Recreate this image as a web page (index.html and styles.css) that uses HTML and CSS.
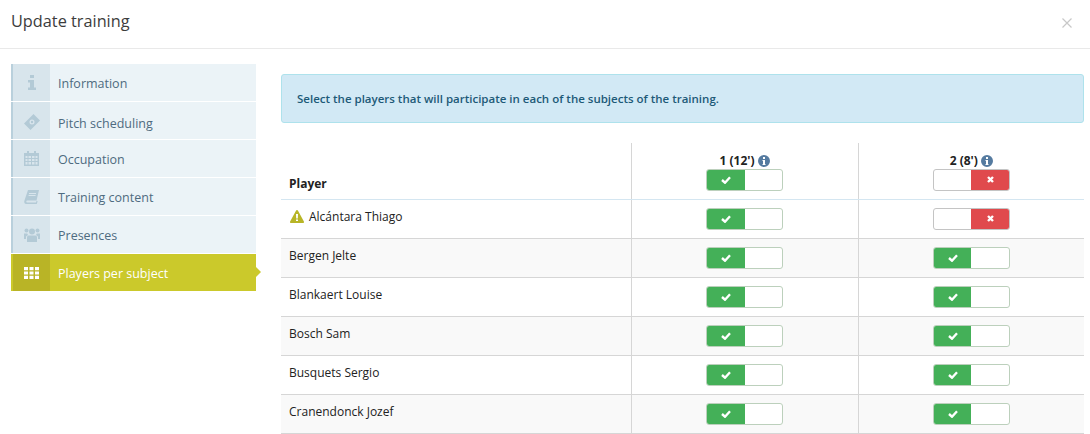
FILE: index.html
```html
<!DOCTYPE html>
<html lang="en">
<head>
    <meta charset="UTF-8">
    <title>Update training</title>
    <link rel="stylesheet" href="styles.css">
</head>
<body>
    <header class="modal-header">
        <h1>Update training</h1>
        <svg class="close" width="10" height="10" viewBox="0 0 10 10"><path d="M.5.5l9 9M9.5.5l-9 9" stroke="#c8c8c8" stroke-width="1.2" fill="none"/></svg>
    </header>
    <div class="modal-body">
        <nav class="side-nav">
            <a class="nav-item">
                <span class="nav-icon"><svg width="8" height="15" viewBox="0 0 8 15"><path d="M2 0h4v3H2zM0 5h6v7.500h2V15H0v-2.500h2V7.500H0z"/></svg></span>
                <span class="nav-label">Information</span>
            </a>
            <a class="nav-item shifted">
                <span class="nav-icon"><svg width="16" height="16" viewBox="0 0 16 16"><path fill-rule="evenodd" d="M9.500 0L16 6.500 6.500 16 0 9.500zM8 5.500a2.500 2.500 0 1 0 0 5 2.500 2.500 0 0 0 0-5zM8 6.800a1.200 1.200 0 1 1 0 2.400 1.200 1.200 0 0 1 0-2.400z"/></svg></span>
                <span class="nav-label">Pitch scheduling</span>
            </a>
            <a class="nav-item">
                <span class="nav-icon"><svg width="15" height="15" viewBox="0 0 15 15"><path fill-rule="evenodd" d="M3 0h2v2h5V0h2v2h3v13H0V2h3zM1.500 5v2h2V5zm3 0v2h2.500V5zm3.500 0v2h2.500V5zm3.500 0v2h2V5zm-10 3v2h2V8zm3 0v2h2.500V8zm3.500 0v2h2.500V8zm3.500 0v2h2V8zm-10 3v2.500h2V11zm3 0v2.500h2.500V11zm3.500 0v2.500h2.500V11zm3.500 0v2.500h2V11z"/></svg></span>
                <span class="nav-label">Occupation</span>
            </a>
            <a class="nav-item">
                <span class="nav-icon"><svg width="15" height="14" viewBox="0 0 15 14"><path fill-rule="evenodd" d="M4 0h11l-2.500 10.500H3.200c-1.200 0-1.200 2 0 2H12l.6-1.800 1 .500-.8 2.800H2.200C.5 14 0 12.500.3 11zM5 3v1h7V3zM4.600 5v1h7V5z"/></svg></span>
                <span class="nav-label">Training content</span>
            </a>
            <a class="nav-item">
                <span class="nav-icon"><svg width="16" height="14" viewBox="0 0 16 14"><circle cx="8" cy="3.500" r="3"/><circle cx="2.500" cy="2.500" r="2"/><circle cx="13.500" cy="2.500" r="2"/><path d="M4.500 7.500h7c1 0 1.500 1 1.500 2V14H3V9.500c0-1 .5-2 1.500-2zM0 5.500h3.200L4 7 2 8.500V11H0zM12.800 5.500H16V11h-2V8.500L12 7z"/></svg></span>
                <span class="nav-label">Presences</span>
            </a>
            <a class="nav-item active">
                <span class="nav-icon"><svg width="15" height="12" viewBox="0 0 15 12"><path d="M0 0h4v3.300H0zM5.500 0h4v3.300h-4zM11 0h4v3.300h-4zM0 4.400h4v3.200H0zM5.500 4.400h4v3.200h-4zM11 4.400h4v3.200h-4zM0 8.700h4V12H0zM5.500 8.700h4V12h-4zM11 8.700h4V12h-4z"/></svg></span>
                <span class="nav-label">Players per subject</span>
            </a>
        </nav>
        <main class="content">
            <div class="alert">Select the players that will participate in each of the subjects of the training.</div>
            <table class="players">
                <thead>
                    <tr>
                        <th class="name">Player</th>
                        <th>
                            <div class="subject">1 (12') <svg class="info" width="12" height="12" viewBox="0 0 12 12"><path fill-rule="evenodd" d="M6 0a6 6 0 1 1 0 12A6 6 0 0 1 6 0zM5 2v2h2V2zM4.500 5v1H5v3h-.5v1h3V9H7V5z"/></svg></div>
                            <span class="toggle on"><b><svg width="10" height="8" viewBox="0 0 10 8"><path d="M1 4l3 2.700L9 1.300" stroke="#fff" stroke-width="2.400" fill="none"/></svg></b><i></i></span>
                        </th>
                        <th>
                            <div class="subject">2 (8') <svg class="info" width="12" height="12" viewBox="0 0 12 12"><path fill-rule="evenodd" d="M6 0a6 6 0 1 1 0 12A6 6 0 0 1 6 0zM5 2v2h2V2zM4.500 5v1H5v3h-.5v1h3V9H7V5z"/></svg></div>
                            <span class="toggle off"><i></i><b><svg width="7" height="7" viewBox="0 0 7 7"><path d="M1 1l5 5M6 1L1 6" stroke="#fff" stroke-width="2.400" fill="none"/></svg></b></span>
                        </th>
                    </tr>
                </thead>
                <tbody>
                    <tr>
                        <td class="name"><svg class="warn" width="14" height="13" viewBox="0 0 14 13"><path fill-rule="evenodd" d="M7 0c.4 0 .7.200.9.500l6 11c.3.600-.1 1.500-.9 1.500H1c-.8 0-1.200-.9-.9-1.500l6-11C6.300.200 6.600 0 7 0zM6 4l.2 4.500h1.600L8 4zM6 9.500V11h2V9.500z"/></svg>Alcántara Thiago</td>
                        <td><span class="toggle on"><b><svg width="10" height="8" viewBox="0 0 10 8"><path d="M1 4l3 2.700L9 1.300" stroke="#fff" stroke-width="2.400" fill="none"/></svg></b><i></i></span></td>
                        <td><span class="toggle off"><i></i><b><svg width="7" height="7" viewBox="0 0 7 7"><path d="M1 1l5 5M6 1L1 6" stroke="#fff" stroke-width="2.400" fill="none"/></svg></b></span></td>
                    </tr>
                    <tr>
                        <td class="name">Bergen Jelte</td>
                        <td><span class="toggle on"><b><svg width="10" height="8" viewBox="0 0 10 8"><path d="M1 4l3 2.700L9 1.300" stroke="#fff" stroke-width="2.400" fill="none"/></svg></b><i></i></span></td>
                        <td><span class="toggle on"><b><svg width="10" height="8" viewBox="0 0 10 8"><path d="M1 4l3 2.700L9 1.300" stroke="#fff" stroke-width="2.400" fill="none"/></svg></b><i></i></span></td>
                    </tr>
                    <tr>
                        <td class="name">Blankaert Louise</td>
                        <td><span class="toggle on"><b><svg width="10" height="8" viewBox="0 0 10 8"><path d="M1 4l3 2.700L9 1.300" stroke="#fff" stroke-width="2.400" fill="none"/></svg></b><i></i></span></td>
                        <td><span class="toggle on"><b><svg width="10" height="8" viewBox="0 0 10 8"><path d="M1 4l3 2.700L9 1.300" stroke="#fff" stroke-width="2.400" fill="none"/></svg></b><i></i></span></td>
                    </tr>
                    <tr>
                        <td class="name">Bosch Sam</td>
                        <td><span class="toggle on"><b><svg width="10" height="8" viewBox="0 0 10 8"><path d="M1 4l3 2.700L9 1.300" stroke="#fff" stroke-width="2.400" fill="none"/></svg></b><i></i></span></td>
                        <td><span class="toggle on"><b><svg width="10" height="8" viewBox="0 0 10 8"><path d="M1 4l3 2.700L9 1.300" stroke="#fff" stroke-width="2.400" fill="none"/></svg></b><i></i></span></td>
                    </tr>
                    <tr>
                        <td class="name">Busquets Sergio</td>
                        <td><span class="toggle on"><b><svg width="10" height="8" viewBox="0 0 10 8"><path d="M1 4l3 2.700L9 1.300" stroke="#fff" stroke-width="2.400" fill="none"/></svg></b><i></i></span></td>
                        <td><span class="toggle on"><b><svg width="10" height="8" viewBox="0 0 10 8"><path d="M1 4l3 2.700L9 1.300" stroke="#fff" stroke-width="2.400" fill="none"/></svg></b><i></i></span></td>
                    </tr>
                    <tr>
                        <td class="name">Cranendonck Jozef</td>
                        <td><span class="toggle on"><b><svg width="10" height="8" viewBox="0 0 10 8"><path d="M1 4l3 2.700L9 1.300" stroke="#fff" stroke-width="2.400" fill="none"/></svg></b><i></i></span></td>
                        <td><span class="toggle on"><b><svg width="10" height="8" viewBox="0 0 10 8"><path d="M1 4l3 2.700L9 1.300" stroke="#fff" stroke-width="2.400" fill="none"/></svg></b><i></i></span></td>
                    </tr>
                </tbody>
            </table>
        </main>
    </div>
</body>
</html>
```

FILE: styles.css
```css
html, body {
    height: 100%;
    overflow: hidden;
}
body {
    margin: 0;
    background-color: #fff;
    color: #222;
    font-family: "Open Sans", sans-serif;
    font-size: 12px;
}
svg {
    display: block;
}
.modal-header {
    display: flex;
    justify-content: space-between;
    align-items: center;
    box-sizing: border-box;
    height: 49px;
    padding: 0 18px 4px 11px;
    border-bottom: 1px solid #e9e9e9;
}
.modal-header h1 {
    margin: 0 0 2px;
    font-size: 16.3px;
    font-weight: 400;
    color: #3c3c3c;
}
.modal-header .close {
    margin-top: 2px;
}
.modal-body {
    display: flex;
    padding: 15px 6px 0 11px;
}
.side-nav {
    display: flex;
    flex-direction: column;
    gap: 1px;
    flex: none;
    width: 245px;
}
.nav-item {
    position: relative;
    display: flex;
    align-items: center;
    height: 37px;
    background-color: #ebf3f7;
    color: #4e6b80;
    font-size: 12.5px;
}
.nav-label {
    padding-top: 2px;
}
.nav-item.shifted .nav-label, .nav-item.shifted svg {
    margin-top: 3px;
}
.nav-icon {
    display: flex;
    justify-content: center;
    align-items: center;
    flex: none;
    box-sizing: border-box;
    width: 39px;
    height: 100%;
    margin-right: 8px;
    background-color: #d8e5ec;
    border-left: 2px solid #b9d0dc;
    fill: #b3cad6;
}
.nav-item.active {
    background-color: #cbc92b;
    color: #fff;
}
.nav-item.active .nav-icon {
    background-color: #b9b426;
    border-left-color: #cbc92b;
    fill: #fff;
}
.nav-item.active::after {
    content: "";
    position: absolute;
    left: 100%;
    top: 13px;
    border-left: 5px solid #cbc92b;
    border-top: 5px solid transparent;
    border-bottom: 5px solid transparent;
}
.content {
    flex: 1;
    margin-left: 25px;
    padding-top: 10px;
}
.alert {
    box-sizing: border-box;
    height: 49px;
    padding: 0 15px;
    line-height: 47px;
    margin-bottom: 20px;
    background-color: #d2e9f5;
    border: 1px solid #aee2ec;
    border-radius: 3px;
    color: #1d5a78;
    font-size: 11.5px;
    font-weight: 600;
}
.players {
    width: 803px;
    table-layout: fixed;
    border-collapse: collapse;
}
.players th, .players td {
    box-sizing: border-box;
    padding: 0;
    text-align: center;
    border-left: 1px solid #d6d6d6;
    border-bottom: 1px solid #d6d6d6;
}
.players th {
    height: 56px;
    vertical-align: bottom;
    padding-bottom: 8px;
    font-size: 12px;
    color: #222;
    border-bottom-color: #d4e6f1;
}
.players td {
    height: 39px;
}
.players th:nth-child(2), .players td:nth-child(2) {
    width: 227px;
}
.players th:nth-child(3), .players td:nth-child(3) {
    width: 226px;
}
.players .name {
    width: 350px;
    text-align: left;
    border-left: 0;
    padding-left: 8px;
    font-size: 12px;
}
.players th.name {
    padding-bottom: 7px;
}
.players td.name {
    padding-bottom: 4px;
}
.players tbody tr:nth-child(even) {
    background-color: #f9f9f9;
}
.subject {
    display: flex;
    justify-content: center;
    align-items: center;
    gap: 3px;
    height: 14px;
    margin-bottom: 1px;
}
.info {
    fill: #557ba0;
}
.warn {
    display: inline-block;
    vertical-align: -2px;
    margin: 0 5px 0 1px;
    fill: #b8b527;
}
.toggle {
    display: inline-flex;
    box-sizing: border-box;
    width: 77px;
    height: 22px;
    vertical-align: middle;
    background-color: #fff;
    border: 1px solid #c4c4c4;
    border-radius: 3px;
    overflow: hidden;
}
.toggle b, .toggle i {
    display: flex;
    justify-content: center;
    align-items: center;
    flex: 1;
}
.toggle.on {
    border-color: #bcd0bc;
}
.toggle.on b {
    background-color: #44b058;
}
.toggle.off b {
    background-color: #e04a4d;
}
```
